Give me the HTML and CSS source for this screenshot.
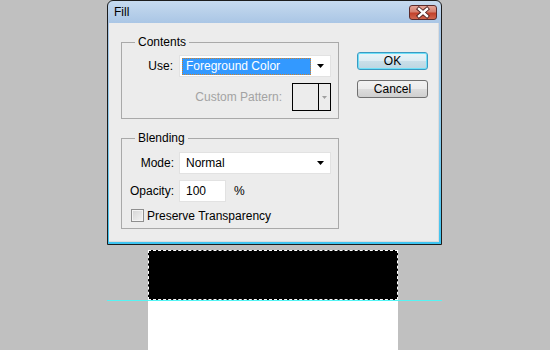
FILE: index.html
```html
<!DOCTYPE html>
<html lang="en">
<head>
    <meta charset="UTF-8">
    <title>Fill</title>
    <link rel="stylesheet" href="styles.css">
</head>
<body>
    <div class="dialog">
        <div class="titlebar">
            <span class="title">Fill</span>
            <span class="close">
                <svg width="26" height="13" viewBox="0 0 26 13">
                    <path d="M9 3 L17 10 M17 3 L9 10" stroke="#4a2020" stroke-width="4.2" stroke-linecap="square"/>
                    <path d="M9 3 L17 10 M17 3 L9 10" stroke="#fff" stroke-width="2.4" stroke-linecap="square"/>
                </svg>
            </span>
        </div>
        <div class="dialog-body">
            <div class="groups">
                <fieldset class="group contents">
                    <legend>Contents</legend>
                    <div class="row use-row">
                        <span class="label">Use:</span>
                        <div class="select">
                            <span class="value selected">Foreground Color</span>
                            <span class="arrow"><svg width="7" height="4"><polygon points="0,0 7,0 3.5,4" fill="#000"/></svg></span>
                        </div>
                    </div>
                    <div class="row pattern-row">
                        <span class="label disabled">Custom Pattern:</span>
                        <div class="pattern">
                            <span class="swatch"></span>
                            <span class="pattern-arrow"><svg width="5" height="3"><polygon points="0,0 5,0 2.5,3" fill="#a0a0a0"/></svg></span>
                        </div>
                    </div>
                </fieldset>
                <fieldset class="group blending">
                    <legend>Blending</legend>
                    <div class="form-grid">
                        <span class="label">Mode:</span>
                        <div class="select">
                            <span class="value">Normal</span>
                            <span class="arrow"><svg width="7" height="4"><polygon points="0,0 7,0 3.5,4" fill="#000"/></svg></span>
                        </div>
                        <span class="label">Opacity:</span>
                        <div class="opacity">
                            <span class="input">100</span>
                            <span>%</span>
                        </div>
                        <label class="check-row">
                            <span class="checkbox"></span>
                            <span>Preserve Transparency</span>
                        </label>
                    </div>
                </fieldset>
            </div>
            <div class="buttons">
                <button class="btn default">OK</button>
                <button class="btn">Cancel</button>
            </div>
        </div>
    </div>

    <div class="canvas">
        <div class="selection"></div>
        <div class="paper"></div>
    </div>
    <div class="guide"></div>
</body>
</html>
```

FILE: styles.css
```css
body {
    margin: 0;
    height: 350px;
    overflow: hidden;
    position: relative;
    background-color: #c0c0c0;
    font-family: "Liberation Sans", Arial, sans-serif;
    font-size: 12px;
    color: #000;
}

/* window frame */
.dialog {
    margin-left: 107px;
    width: 335px;
    height: 245px;
    box-sizing: border-box;
    border: 1px solid #1c1c1c;
    border-radius: 6px 6px 0 0;
    padding: 0 2px 2px 1px;
    background: linear-gradient(#c6daef, #aac6e5 22px, #8fcbec 120px, #3ec4f0);
    display: flex;
    flex-direction: column;
}
.titlebar {
    height: 22px;
    display: flex;
    justify-content: space-between;
    align-items: flex-start;
    padding-left: 5px;
}
.title {
    line-height: 22px;
}
.close {
    margin-top: 4px;
    margin-right: 2px;
    width: 28px;
    height: 15px;
    box-sizing: border-box;
    border: 1px solid #5b2b2b;
    border-radius: 3px;
    background: linear-gradient(#e5a599, #d5806f 45%, #c2412b 55%, #d0664f);
    display: flex;
    align-items: center;
    justify-content: center;
}
.close svg {
    display: block;
}
.dialog-body {
    flex: 1;
    background-color: #ececec;
    box-shadow: inset -1px -1px #dcdcdc;
    display: flex;
    padding: 12px 11px 0 12px;
}

/* group boxes */
.groups {
    width: 218px;
}
.group {
    margin: 0;
    border: 1px solid #a9a9a9;
    min-width: 0;
}
.group legend {
    padding: 0 3px;
    margin-left: 4px;
    line-height: 14px;
}
.contents {
    padding: 6px 7px 7px 9px;
}
.blending {
    margin-top: 12px;
    padding: 7px 7px 5px 9px;
}
.row {
    display: flex;
    align-items: center;
    justify-content: flex-end;
}
.use-row .label {
    margin-right: 6px;
}
.pattern-row {
    margin-top: 6px;
}
.pattern-row .label {
    margin-right: 10px;
}
.disabled {
    color: #a3a3a3;
}

/* dropdowns and fields */
.select {
    width: 152px;
    height: 22px;
    box-sizing: border-box;
    border: 1px solid #e2e2e2;
    background-color: #fff;
    padding: 2px;
    display: flex;
    align-items: center;
}
.value {
    flex: 1;
    height: 17px;
    line-height: 17px;
    padding-left: 4px;
}
.value.selected {
    background-color: #3399ff;
    color: #fff;
    outline: 1px dotted #d0822a;
    outline-offset: -1px;
}
.arrow {
    width: 15px;
    display: flex;
    justify-content: center;
    padding-left: 2px;
}
.arrow svg {
    display: block;
}
.pattern {
    width: 39px;
    height: 28px;
    box-sizing: border-box;
    border: 1px solid #000;
    display: flex;
}
.swatch {
    width: 25px;
    border-right: 1px solid #000;
}
.pattern-arrow {
    flex: 1;
    display: flex;
    align-items: center;
    justify-content: center;
}
.pattern-arrow svg {
    display: block;
}

.form-grid {
    display: grid;
    grid-template-columns: 43px 1fr;
    column-gap: 5px;
    row-gap: 6px;
    align-items: center;
}
.form-grid .label {
    justify-self: end;
}
.opacity {
    display: flex;
    align-items: center;
    gap: 8px;
}
.input {
    width: 47px;
    height: 22px;
    box-sizing: border-box;
    border: 1px solid #e2e2e2;
    background-color: #fff;
    line-height: 20px;
    padding-left: 6px;
}
.check-row {
    grid-column: 1 / 3;
    height: 15px;
    display: flex;
    align-items: center;
    gap: 3px;
}
.checkbox {
    width: 13px;
    height: 13px;
    box-sizing: border-box;
    border: 1px solid #8f8f8f;
    background: linear-gradient(135deg, #d4d4d4, #f4f4f4);
    box-shadow: inset 0 0 0 1px #f4f4f4;
}

/* buttons */
.buttons {
    margin-left: 18px;
    padding-top: 17px;
    display: flex;
    flex-direction: column;
    gap: 10px;
}
.btn {
    width: 71px;
    height: 18px;
    padding: 0;
    border: 1px solid #707070;
    border-radius: 3px;
    background: linear-gradient(#f2f2f2, #ebebeb 50%, #dddddd 50%, #cfcfcf);
    font-family: inherit;
    font-size: 12px;
    color: #000;
    line-height: 16px;
}
.btn.default {
    border-color: #3a9ac2;
    box-shadow: inset 0 0 0 1px #6fe0f8;
    background: linear-gradient(#eaf4f8, #dcecf3 50%, #c9dfe9 50%, #bcd6e2);
}

/* document canvas */
.canvas {
    margin: 5px 0 0 148px;
    width: 250px;
}
.selection {
    height: 50px;
    box-sizing: border-box;
    background-color: #000;
    border: 1px dashed #fff;
}
.paper {
    height: 60px;
    background-color: #fff;
}
.guide {
    position: absolute;
    left: 107px;
    top: 300px;
    width: 335px;
    height: 1px;
    background-color: #55f4f4;
}
```
